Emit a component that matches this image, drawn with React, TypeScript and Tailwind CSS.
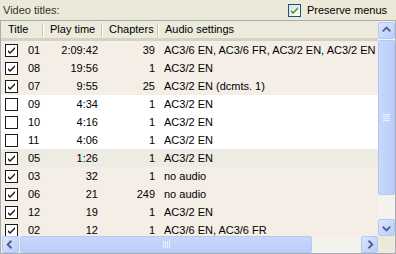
import React from 'react';

const ROWS = [
  { on: true, id: '01', time: '2:09:42', ch: '39', audio: 'AC3/6 EN, AC3/6 FR, AC3/2 EN, AC3/2 EN' },
  { on: true, id: '08', time: '19:56', ch: '1', audio: 'AC3/2 EN' },
  { on: true, id: '07', time: '9:55', ch: '25', audio: 'AC3/2 EN (dcmts. 1)' },
  { on: false, id: '09', time: '4:34', ch: '1', audio: 'AC3/2 EN' },
  { on: false, id: '10', time: '4:16', ch: '1', audio: 'AC3/2 EN' },
  { on: false, id: '11', time: '4:06', ch: '1', audio: 'AC3/2 EN' },
  { on: true, id: '05', time: '1:26', ch: '1', audio: 'AC3/2 EN', hot: true },
  { on: true, id: '03', time: '32', ch: '1', audio: 'no audio' },
  { on: true, id: '06', time: '21', ch: '249', audio: 'no audio' },
  { on: true, id: '12', time: '19', ch: '1', audio: 'AC3/2 EN' },
  { on: true, id: '02', time: '12', ch: '1', audio: 'AC3/6 EN, AC3/6 FR' },
];

function RowCheck({ on }: { on: boolean }) {
  return (
    <svg width="13" height="13" viewBox="0 0 13 13" className="shrink-0">
      <rect x="0.5" y="0.5" width="12" height="12" fill="#fff" stroke="#1a1a1a" />
      {on && <path d="M3 6 L5 8 L10 3 L10 5 L5 10 L3 8 Z" fill="#1a1a1a" />}
    </svg>
  );
}

function Arrow({ dir }: { dir: 'up' | 'down' | 'left' | 'right' }) {
  const d = {
    up: 'M4 9 L8 5 L12 9',
    down: 'M4 7 L8 11 L12 7',
    left: 'M9 4 L5 8 L9 12',
    right: 'M7 4 L11 8 L7 12',
  }[dir];
  return (
    <div className="w-[17px] h-[17px] shrink-0 rounded-[2px] border border-[#b4c8f6] bg-gradient-to-br from-[#dce6fd] to-[#b8cdfb] flex items-center justify-center">
      <svg width="15" height="15" viewBox="0 0 16 16">
        <path d={d} fill="none" stroke="#4d6185" strokeWidth="2" />
      </svg>
    </div>
  );
}

function Grip({ vertical }: { vertical?: boolean }) {
  return (
    <div className={vertical ? 'flex flex-col gap-[1px]' : 'flex gap-[1px]'}>
      {[0, 1, 2, 3].map(i => (
        <div key={i} className={vertical ? 'w-[7px] h-[1px] bg-[#eef4fe]' : 'w-[1px] h-[7px] bg-[#eef4fe]'} />
      ))}
    </div>
  );
}

export default function App() {
  return (
    <div className="w-[396px] h-[254px] bg-[#ece9d8] text-[11px] text-black overflow-hidden" style={{ fontFamily: '"Liberation Sans", Arial, sans-serif' }}>
      <div className="h-[20px] flex items-center justify-between pl-[3px] pr-[9px]">
        <span className="text-[#333]">Video titles:</span>
        <label className="flex items-center gap-[6px]">
          <svg width="13" height="13" viewBox="0 0 13 13">
            <defs>
              <linearGradient id="cb" x1="0" y1="0" x2="1" y2="1">
                <stop offset="0" stopColor="#dcdcd7" />
                <stop offset="1" stopColor="#ffffff" />
              </linearGradient>
            </defs>
            <rect x="0.5" y="0.5" width="12" height="12" fill="url(#cb)" stroke="#1c5180" />
            <path d="M3 6 L5 8 L10 3 L10 5 L5 10 L3 8 Z" fill="#21a121" />
          </svg>
          <span>Preserve menus</span>
        </label>
      </div>

      <div className="h-[234px] border border-[#a5acb5] bg-white flex flex-col">
        <div className="flex flex-1 min-h-0">
          <div className="flex-1 min-w-0 overflow-hidden flex flex-col">
            <div className="h-[20px] shrink-0 grid grid-cols-[43px_59px_56px_1fr] bg-[#ebeadb] border-b-[3px] border-[#d6d2c2]">
              {['Title', 'Play time', 'Chapters', 'Audio settings'].map((h, i) => (
                <div key={h} className="flex items-center justify-between whitespace-nowrap">
                  <span className={i === 0 ? 'pl-[7px]' : 'pl-[6px]'}>{h}</span>
                  {i < 3 && <div className="w-[2px] h-[14px] border-l border-[#c7c5b2] border-r border-r-white" />}
                </div>
              ))}
            </div>
            {ROWS.map(r => (
              <div
                key={r.id}
                className={`h-[18px] shrink-0 grid grid-cols-[43px_59px_56px_1fr] items-center whitespace-nowrap ${r.hot ? 'bg-[#eeebe3]' : r.on ? 'bg-[#f4eee6]' : 'bg-white'}`}
              >
                <div className="flex items-center pl-[4px] gap-[10px]">
                  <RowCheck on={r.on} />
                  <span>{r.id}</span>
                </div>
                <div className="text-right pr-[5px]">{r.time}</div>
                <div className="text-right pr-[4px]">{r.ch}</div>
                <div className="pl-[5px] overflow-hidden">{r.audio}</div>
              </div>
            ))}
          </div>
          <div className="w-[17px] shrink-0 bg-[#f3f2ec] flex flex-col pt-[1px]">
            <Arrow dir="up" />
            <div className="h-[155px] mt-[1px] rounded-[2px] border border-[#b4c8f6] bg-gradient-to-r from-[#c8d8fc] to-[#b9cdfa] flex items-center justify-center">
              <Grip vertical />
            </div>
            <div className="flex-1" />
            <Arrow dir="down" />
          </div>
        </div>
        <div className="h-[17px] shrink-0 flex bg-[#f3f2ec]">
          <div className="flex-1 flex pl-[1px]">
            <Arrow dir="left" />
            <div className="w-[292px] ml-[1px] rounded-[2px] border border-[#b4c8f6] bg-gradient-to-b from-[#c8d8fc] to-[#b9cdfa] flex items-center justify-center">
              <Grip />
            </div>
            <div className="flex-1" />
            <Arrow dir="right" />
          </div>
          <div className="w-[17px] bg-[#ece9d8]" />
        </div>
      </div>
    </div>
  );
}
